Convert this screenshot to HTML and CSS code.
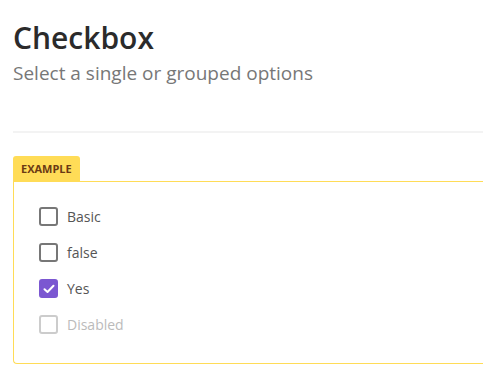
FILE: index.html
```html
<!DOCTYPE html>
<html>
<head>
    <title>Checkbox</title>
    <link rel="stylesheet" href="styles.css">
</head>
<body>
    <div class="page">
        <h1 class="title">Checkbox</h1>
        <p class="subtitle">Select a single or grouped options</p>
        <hr class="divider">

        <div class="example">
            <div class="exampleTab">EXAMPLE</div>
            <div class="exampleBody">
                <label class="check"><span class="box"></span>Basic</label>
                <label class="check"><span class="box"></span>false</label>
                <label class="check checked">
                    <span class="box">
                        <svg width="12" height="10" viewBox="0 0 12 10"><path d="M1.5 5.2 L4.5 8 L10.5 1.8" fill="none" stroke="#fff" stroke-width="2" stroke-linecap="round" stroke-linejoin="round"/></svg>
                    </span>Yes
                </label>
                <label class="check disabled"><span class="box"></span>Disabled</label>
            </div>
        </div>
    </div>
</body>
</html>
```

FILE: styles.css
```css
html, body {margin: 0; padding: 0;}

body
{
    background: #fff;
    overflow: hidden;
    font-family: "Open Sans", "Noto Sans", sans-serif;
}

.page
{
    width: 520px;
    padding: 20px 0 0 13px;
}

.title
{
    margin: 0;
    font-size: 30px;
    font-weight: 600;
    line-height: 36px;
    color: #2b2b2b;
}

.subtitle
{
    margin: 4px 0 0 0;
    font-size: 19px;
    line-height: 26px;
    color: #777;
}

.divider
{
    margin: 45px 0 0 0;
    border: none;
    height: 2px;
    background: #f3f3f3;
}

.example
{
    margin-top: 23px;
}

.exampleTab
{
    display: inline-block;
    background: #ffdc57;
    color: #6b3a14;
    font-size: 11px;
    font-weight: 700;
    line-height: 25px;
    padding: 0 8px;
    border-radius: 3px 3px 0 0;
}

.exampleBody
{
    border: 1px solid #ffdc57;
    border-right: none;
    border-radius: 0 0 0 4px;
    padding: 24px 0 28px 25px;
    display: flex;
    flex-direction: column;
    gap: 15px;
}

.check
{
    display: flex;
    align-items: center;
    gap: 9px;
    font-size: 14px;
    line-height: 21px;
    color: #555;
}

.box
{
    box-sizing: border-box;
    width: 19px;
    height: 19px;
    border: 2px solid #777;
    border-radius: 3px;
    display: flex;
    align-items: center;
    justify-content: center;
}

.checked .box
{
    background: #7b57d1;
    border-color: #7b57d1;
}

.disabled
{
    color: #bbb;
}

.disabled .box
{
    border-color: #ccc;
}
```
